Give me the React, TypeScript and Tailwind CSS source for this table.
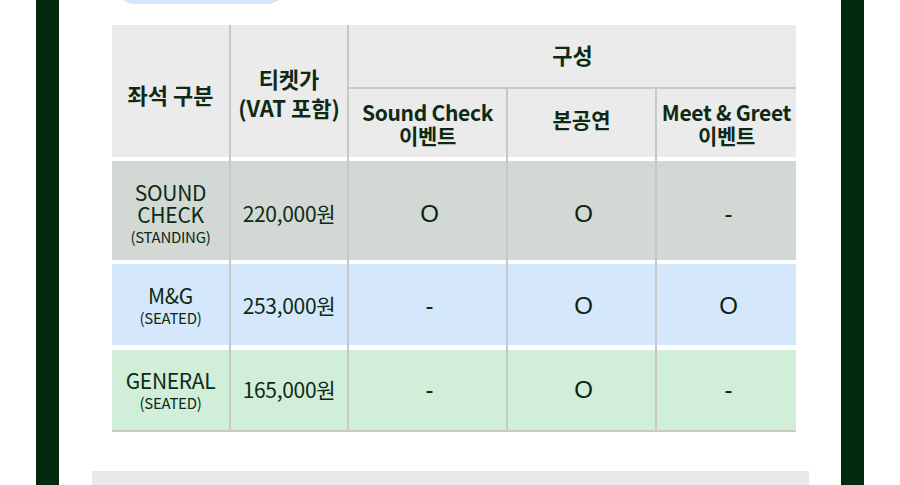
import React from "react";

const kr = "font-['Noto_Sans_CJK_KR','Noto_Sans',sans-serif]";
const txt = "text-[#0e2a15]";

type Row = {
  bg: string;
  h: string;
  top: string;
  label: React.ReactNode;
  sub: string;
  price: string;
  vals: string[];
  pad: string;
};

const rows: Row[] = [
  {
    bg: "bg-[#d2d8d3]",
    h: "h-[103px]",
    top: "border-t-4",
    label: (
      <>
        <div>SOUND</div>
        <div>CHECK</div>
      </>
    ),
    sub: "(STANDING)",
    price: "220,000원",
    vals: ["O", "O", "-"],
    pad: "pt-[6px]",
  },
  {
    bg: "bg-[#d5e7fb]",
    h: "h-[85px]",
    top: "border-t-4",
    label: <div>M&amp;G</div>,
    sub: "(SEATED)",
    price: "253,000원",
    vals: ["-", "O", "O"],
    pad: "pt-[2px]",
  },
  {
    bg: "bg-[#d0eed8]",
    h: "h-[87px]",
    top: "border-t-[5px]",
    label: <div>GENERAL</div>,
    sub: "(SEATED)",
    price: "165,000원",
    vals: ["-", "O", "-"],
    pad: "pt-0",
  },
];

export default function App() {
  return (
    <div className="w-[900px] h-[485px] overflow-hidden bg-white flex px-[36px]">
      <div className="w-[828px] h-[485px] border-x-[23px] border-[#022a0d] bg-white flex flex-col">
        <div className="ml-[56px] w-[172px] h-[40px] -mt-[36px] rounded-full bg-[#d5e6fb] shrink-0" />
        <div
          className={`ml-[53px] mt-[21px] w-[684px] grid grid-cols-[117px_116px_157px_147px_139px] gap-x-[2px] bg-[#c8c8c8] ${kr} ${txt}`}
        >
          {/* header */}
          <div className="row-span-2 bg-[#ebebeb] flex items-center justify-center text-[22px] font-bold pt-[6px]">
            좌석 구분
          </div>
          <div className="row-span-2 bg-[#ebebeb] flex flex-col items-center justify-center text-[22px] font-bold leading-[29px] pt-[4px]">
            <span>티켓가</span>
            <span>(VAT 포함)</span>
          </div>
          <div className="col-span-3 h-[64px] bg-[#ebebeb] border-b-2 border-[#c8c8c8] flex items-center justify-center text-[22px] font-bold pb-[3px]">
            구성
          </div>
          <div className="h-[68px] bg-[#ebebeb] flex flex-col items-center justify-center text-[21px] font-bold leading-[23px] tracking-[-0.3px] pt-[1px]">
            <span>Sound Check</span>
            <span>이벤트</span>
          </div>
          <div className="h-[68px] bg-[#ebebeb] flex items-center justify-center text-[21px] font-bold pb-[6px]">
            본공연
          </div>
          <div className="h-[68px] bg-[#ebebeb] flex flex-col items-center justify-center text-[21px] font-bold leading-[23px] tracking-[-0.3px] pt-[1px]">
            <span>Meet &amp; Greet</span>
            <span>이벤트</span>
          </div>

          {rows.map((r, i) => (
            <React.Fragment key={i}>
              <div
                className={`${r.h} ${r.bg} ${r.top} ${r.pad} ${i === 2 ? "border-b-2 border-b-[#c8c8c8]" : ""} border-t-white flex flex-col items-center justify-center text-center`}
              >
                <div className="text-[21px] leading-[22px] tracking-[-0.3px]">{r.label}</div>
                <div className="text-[15px] leading-[18px] mt-[3px] tracking-[-0.3px]">{r.sub}</div>
              </div>
              <div
                className={`${r.h} ${r.bg} ${r.top} ${r.pad} ${i === 2 ? "border-b-2 border-b-[#c8c8c8]" : ""} border-t-white flex items-center justify-center text-[21px] tracking-[-0.3px]`}
              >
                {r.price}
              </div>
              {r.vals.map((v, j) => (
                <div
                  key={j}
                  className={`${r.h} ${r.bg} ${r.top} ${r.pad} ${i === 2 ? "border-b-2 border-b-[#c8c8c8]" : ""} border-t-white flex items-center justify-center pl-[4px] font-['Liberation_Sans',Arial,sans-serif] text-[24px] text-[#0a2410]`}
                >
                  {v}
                </div>
              ))}
            </React.Fragment>
          ))}
        </div>
        <div className="ml-[33px] mt-[39px] w-[717px] h-[60px] bg-[#e7e9e7] shrink-0" />
      </div>
    </div>
  );
}
